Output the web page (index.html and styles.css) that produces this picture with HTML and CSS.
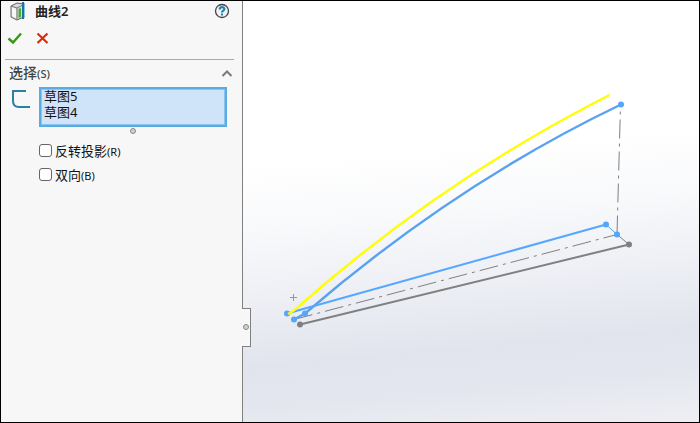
FILE: index.html
```html
<!DOCTYPE html>
<html lang="zh-CN">
<head>
    <meta charset="UTF-8">
    <title>曲线2</title>
    <link rel="stylesheet" href="styles.css">
</head>
<body>

<div class="app">
    <form class="panel">
        <header class="panel-header">
            <svg class="feature-icon" width="18" height="20" viewBox="0 0 18 20" aria-hidden="true">
                <path d="M2 5 L8 2 L15 3 V16 L8 19 L2 16 Z" fill="#d9dadb" stroke="#666" />
                <path d="M3 6 L7 8 V17 L3 15 Z" fill="#f7f7f7" />
                <path d="M2 5 L8 7 L14 4 M8 7 V19" fill="none" stroke="#777" />
                <path d="M9.500 8 L12 7 V16 L9.500 17 Z" fill="#45b02c" />
                <path d="M14 1 V18" stroke="#236f98" stroke-width="2" />
                <path d="M15.500 2 V17" stroke="#7fc4e4" />
            </svg>
            <h1>曲线2</h1>
            <button type="button" class="icon-button" aria-label="帮助">
                <svg width="16" height="16" viewBox="0 0 16 16">
                    <circle cx="8" cy="8" r="6.5" fill="#f2f2f2" stroke="#444" stroke-width="1.3" />
                    <path d="M5.7 6.4 C5.7 3.4 10.4 3.4 10.4 6 C10.4 7.6 8 7.8 8 9.6" fill="none" stroke="#2580ad" stroke-width="2.1" />
                    <rect x="7" y="10.5" width="2" height="2" fill="#2580ad" />
                </svg>
            </button>
        </header>

        <div class="actions">
            <button type="submit" class="icon-button" aria-label="确定">
                <svg width="16" height="16" viewBox="0 0 16 16">
                    <path d="M1.5 8.5 L6 12.5 L14 3.5" fill="none" stroke="#2f9e0f" stroke-width="2.4" />
                </svg>
            </button>
            <button type="reset" class="icon-button" aria-label="取消">
                <svg width="16" height="16" viewBox="0 0 16 16">
                    <path d="M2.500 3.500 L12.500 13 M12.500 3.500 L2.500 13" fill="none" stroke="#dc2a0c" stroke-width="2.2" />
                </svg>
            </button>
        </div>

        <section class="group">
            <div class="group-header">
                <h2>选择<small>(S)</small></h2>
                <button type="button" class="icon-button" aria-label="折叠">
                    <svg width="12" height="16" viewBox="0 0 12 16">
                        <path d="M1.5 10 L6 5.5 L10.500 10" fill="none" stroke="#7a7a7a" stroke-width="2" />
                    </svg>
                </button>
            </div>

            <div class="sketches">
                <svg class="sketch-icon" width="19" height="20" viewBox="0 0 19 20" aria-hidden="true">
                    <path d="M15 2 H2 V12 Q2 18 8 18 H19" fill="none" stroke="#2e7fa5" stroke-width="2" />
                </svg>
                <div class="sketch-box">
                    <select class="sketch-list" size="2" multiple aria-label="选择">
                        <option>草图5</option>
                        <option>草图4</option>
                    </select>
                    <div class="resize-grip"></div>
                </div>
            </div>

            <label class="option"><input type="checkbox"><span>反转投影<small>(R)</small></span></label>
            <label class="option"><input type="checkbox"><span>双向<small>(B)</small></span></label>
        </section>

        <button type="button" class="splitter" aria-label="隐藏面板"></button>
    </form>

    <main class="viewport">
        <svg class="model" viewBox="243 1 456 421" preserveAspectRatio="xMinYMin meet" role="img" aria-label="投影曲线预览">
            <path d="M294 319.500 L617 234.500 M617 234.500 L620.500 105" class="axis" />
            <path d="M617 234.500 L629 244.500" class="edge" />
            <path d="M606 224.500 L617 234.500" class="edge edge-active" />
            <path d="M300 324.500 L629 244.500" class="line line-fixed" />
            <path d="M287 313.500 L606 224.500" class="line" />
            <path d="M294 319.500 L305 313.500 Q455 184 621 104.500" class="curve" />
            <g class="points">
                <circle cx="294" cy="319.500" r="3" />
                <circle cx="305" cy="313.500" r="3" />
                <circle cx="606" cy="224.500" r="3" />
                <circle cx="617" cy="234.500" r="3" />
                <circle cx="621" cy="104.500" r="3" />
                <circle cx="287" cy="313.500" r="3" />
            </g>
            <g class="points points-fixed">
                <circle cx="300" cy="324.500" r="3" />
                <circle cx="629" cy="244.500" r="3" />
            </g>
            <path d="M288 314 Q293 312 298 307 Q442 180 609.500 95" class="curve preview" />
            <path d="M290 297.500 H297 M293.500 294 V301" class="origin" />
        </svg>
    </main>
</div>

</body>
</html>
```
FILE: styles.css
```css
*,
*::before,
*::after {
    box-sizing: border-box;
}

body {
    margin: 0;
    font-family: "Noto Sans", "Noto Sans CJK SC", sans-serif;
    font-size: 13px;
    color: #111;
}

.app {
    display: flex;
    min-height: 100vh;
    border: 1px solid #000;
}

.panel {
    position: relative;
    flex: 0 0 242px;
    padding: 0 0 0 4px;
    background-color: #f7f7f7;
    border-right: 1px solid #808080;
}

.panel-header {
    display: flex;
    align-items: center;
    gap: 8px;
    height: 20px;
    padding: 0 12px 0 4px;
}

h1 {
    flex: 1;
    margin: 0;
    font-size: 13px;
    line-height: 20px;
    font-weight: 600;
    color: #222;
}

h2 {
    flex: 1;
    margin: 0;
    font-size: 14px;
    line-height: 20px;
    font-weight: 500;
    color: #444;
}

small {
    font-size: 11px;
}

.icon-button {
    display: flex;
    padding: 0;
    border: none;
    background: none;
    cursor: pointer;
}

.actions {
    display: flex;
    gap: 12px;
    margin-right: 8px;
    padding: 9px 0 13px 2px;
    border-bottom: 1px solid #a8a8a8;
}

.group {
    padding: 3px 9px 0 4px;
}

.group-header {
    display: flex;
    align-items: center;
}

.sketches {
    display: flex;
    align-items: flex-start;
    gap: 9px;
    padding: 3px 6px 0 2px;
}

.sketch-icon {
    margin-top: 2px;
}

.sketch-box {
    flex: 1;
    min-width: 0;
}

.sketch-list {
    display: block;
    width: 100%;
    height: 40px;
    padding: 0;
    overflow: hidden;
    font-family: inherit;
    font-size: 13px;
    color: #111;
    background-color: #cfe4f9;
    border: 2px solid #55ade2;
    border-radius: 0;
    box-shadow: inset 0 0 0 1px #8fc2ee;
    outline: none;
}

.sketch-list option {
    display: flex;
    align-items: center;
    height: 16px;
    min-height: 0;
    padding: 0 3px 4px;
    line-height: 16px;
}

.resize-grip {
    width: 6px;
    height: 6px;
    margin: 1px auto 4px;
    border: 1px solid #888;
    border-radius: 50%;
    background-color: #d0d0d0;
}

.option {
    display: flex;
    align-items: center;
    gap: 3px;
    height: 24px;
    padding-left: 30px;
}

.option input {
    width: 13px;
    height: 13px;
    margin: 0;
    appearance: none;
    background-color: #fff;
    border: 1px solid #666;
    border-radius: 3px;
}

.option input:checked {
    background-color: #55ade2;
}

/* tab that sticks out over the viewport */
.splitter {
    position: absolute;
    top: 307px;
    right: -9px;
    width: 9px;
    height: 39px;
    padding: 0;
    border: 1px solid #808080;
    border-left: none;
    background-color: #f7f7f7;
    cursor: pointer;
}

.splitter::before {
    content: "";
    position: absolute;
    top: 0;
    left: -1px;
    width: 1px;
    height: 37px;
    background-color: #f7f7f7;
}

.splitter::after {
    content: "";
    position: absolute;
    top: 15px;
    left: 1px;
    width: 6px;
    height: 6px;
    border: 1px solid #888;
    border-radius: 50%;
    background-color: #d0d0d0;
}

.viewport {
    flex: 1;
    min-width: 0;
    display: flex;
    background: linear-gradient(175deg, #fff 0%, #fff 36%, #f8f9fb 50%, #eef0f5 64%, #e1e4ed 80%, #e4e7ef 89%, #eeeff3 100%);
}

.model {
    width: 100%;
    height: auto;
    fill: none;
}

.axis {
    stroke: #808080;
    stroke-dasharray: 19 5 3 5;
}

.edge {
    stroke: #808080;
}

.edge-active,
.origin {
    stroke: #55a5f8;
}

.line {
    stroke: #55a8ff;
    stroke-width: 2;
}

.line-fixed {
    stroke: #808080;
}

.curve {
    stroke: #58a2f0;
    stroke-width: 2.4;
}

.points {
    fill: #55a5f8;
}

.points-fixed {
    fill: #808080;
}

.preview {
    stroke: #ff0;
}
```
